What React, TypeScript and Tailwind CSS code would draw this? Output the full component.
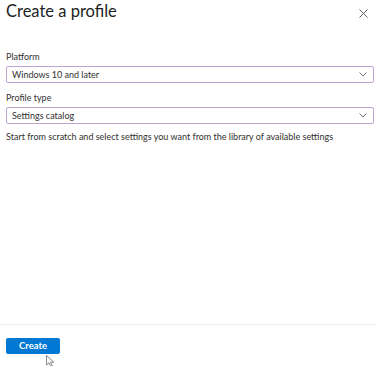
import React from 'react';

const font = { fontFamily: 'Lato, "Open Sans", sans-serif' };

const Chevron: React.FC = () => (
  <svg width="8" height="5" viewBox="0 0 8 5" className="text-[#605e5c]">
    <path d="M0.5 0.5 L4 4 L7.5 0.5" fill="none" stroke="currentColor" strokeWidth="0.9" />
  </svg>
);

const SelectBox: React.FC<{ label: string; value: string; className?: string }> = ({ label, value, className }) => (
  <div className={`flex flex-col ${className ?? ''}`}>
    <label className="text-[9px] leading-[12px] text-[#323130] mb-[3px]">{label}</label>
    <div className="h-[17px] border border-[#bea5d3] rounded-[2px] flex items-center justify-between pl-[5px] pr-[6px]">
      <span className="text-[9px] leading-[12px] text-[#323130]">{value}</span>
      <Chevron />
    </div>
  </div>
);

export default function App() {
  return (
    <div className="h-[366px] w-[375px] bg-white flex flex-col relative overflow-hidden" style={font}>
      <div className="flex items-start justify-between pl-[6px] pr-[7px]">
        <h1 className="text-[16.5px] leading-[22px] text-[#201f1e]">Create a profile</h1>
        <button className="mt-[9px] text-[#605e5c]">
          <svg width="9" height="9" viewBox="0 0 9 9">
            <path d="M0.5 0.5 L8.5 8.5 M8.5 0.5 L0.5 8.5" stroke="currentColor" strokeWidth="1" />
          </svg>
        </button>
      </div>

      <div className="flex flex-col pl-[6px] pr-[1px] mt-[29px]">
        <SelectBox label="Platform" value="Windows 10 and later" />
        <SelectBox label="Profile type" value="Settings catalog" className="mt-[9px]" />
      </div>

      <p className="pl-[6px] mt-[7px] text-[9px] leading-[12px] text-[#323130]">
        Start from scratch and select settings you want from the library of available settings
      </p>

      <div className="flex-1" />

      <div className="border-t border-[#edebe9] h-[42px] pl-[6px] pt-[13px] flex items-start">
        <button className="h-[16px] w-[54px] bg-[#0078d4] rounded-[2px] text-white text-[9.5px] font-bold leading-[16px]">
          Create
        </button>
      </div>

      <svg className="absolute left-[46px] top-[355px]" width="10" height="12" viewBox="0 0 10 12">
        <path d="M0.5 0.5 L0.5 10 L3 7.8 L4.8 11.5 L6.3 10.8 L4.6 7.2 L7.8 7.2 Z" fill="white" stroke="#666" strokeWidth="0.8" />
      </svg>
    </div>
  );
}
